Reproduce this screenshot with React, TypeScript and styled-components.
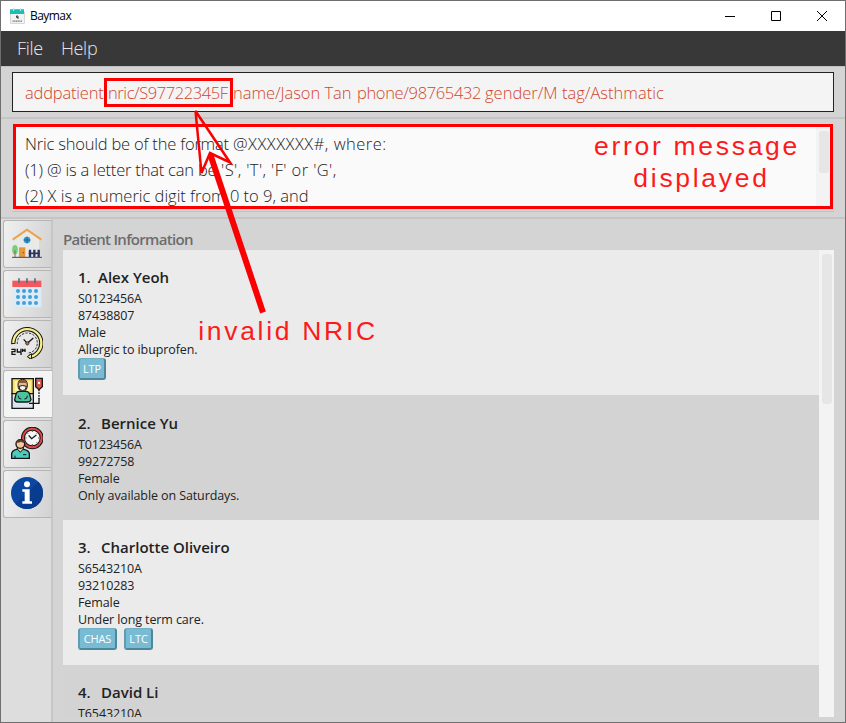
import React from "react";
import styled, { createGlobalStyle } from "styled-components";

const Global = createGlobalStyle`
  * { box-sizing: border-box; }
  html, body { margin: 0; padding: 0; overflow: hidden; }
`;

const ui = `"Open Sans", "Noto Sans", sans-serif`;

const Window = styled.div`
  position: relative;
  display: flex;
  flex-direction: column;
  width: 846px;
  height: 723px;
  overflow: hidden;
  border: 1px solid #6f6f6f;
  background: #d4d4d4;
  font-family: ${ui};
  color: #222;
`;

const TitleBar = styled.header`
  display: flex;
  align-items: center;
  flex: 0 0 30px;
  padding-left: 9px;
  background: #fff;
`;

const Title = styled.span`
  flex: 1;
  margin-left: 5px;
  font-size: 12px;
  line-height: 16px;
  letter-spacing: -0.55px;
  color: #000;
`;

const WindowButton = styled.span`
  display: flex;
  align-items: center;
  justify-content: center;
  width: 46px;
  height: 30px;
`;

const MenuBar = styled.nav`
  display: flex;
  align-items: center;
  flex: 0 0 35px;
  padding: 0 0 1px 16px;
  gap: 18px;
  background: #383838;
`;

const MenuItem = styled.span`
  font-size: 18px;
  font-weight: 300;
  line-height: 24px;
  letter-spacing: -0.3px;
  color: #e6e6e6;
`;

const CommandPane = styled.section`
  flex: 0 0 51px;
  padding: 5px 11px;
  border-top: 1px solid #c0c0c0;
`;

const CommandBox = styled.div`
  display: flex;
  align-items: center;
  height: 40px;
  padding-left: 12px;
  border: 1px solid #222;
  background: #f4f4f4;
  font-size: 16.5px;
  font-weight: 300;
  white-space: pre;
  color: #d0452f;
`;

const Word = styled.span<{ $w: number; $ls?: number }>`
  flex: 0 0 ${(p) => p.$w}px;
  letter-spacing: ${(p) => p.$ls ?? -0.2}px;
`;

const ResultPane = styled.section`
  flex: 0 0 100px;
  padding: 5px 11px;
  border-top: 2px solid #c5c5c5;
`;

const ResultBox = styled.div`
  display: flex;
  height: 88px;
  padding: 0 3px 2px 1px;
  border-bottom: 1px solid #c2c2c2;
`;

const ResultText = styled.div`
  flex: 1;
  height: 85px;
  padding: 7px 0 0 12px;
  background: #fafafa;
  font-size: 16.5px;
  font-weight: 300;
  line-height: 26px;
  letter-spacing: -0.2px;
`;

const ResultLine = styled.div`
  white-space: pre;
`;

const Spaced = styled.span<{ $ls: number }>`
  letter-spacing: ${(p) => p.$ls}px;
`;

const Track = styled.div<{ $w: number }>`
  flex: 0 0 ${(p) => p.$w}px;
  padding: 4px 2px 0 3px;
  background: #f3f3f3;
`;

const Thumb = styled.div<{ $h: number; $top?: number }>`
  width: 10px;
  height: ${(p) => p.$h}px;
  margin-top: ${(p) => p.$top ?? 0}px;
  border-radius: 3px;
  background: #e6e6e6;
`;

const Body = styled.main`
  display: flex;
  flex: 1;
  min-height: 0;
  border-top: 2px solid #c5c5c5;
`;

const Tabs = styled.aside`
  display: flex;
  flex-direction: column;
  flex: 0 0 52px;
  min-width: 0;
  gap: 2px;
  padding: 1px 0 0 2px;
  background: #dddddd;
  border-right: 2px solid #c6c6c6;
`;

const Tab = styled.div<{ $active?: boolean }>`
  flex: 0 0 48px;
  width: ${(p) => (p.$active ? 49 : 48)}px;
  padding: 6px 0 0 7px;
  border: 1px solid #b5b5b5;
  border-right: 0;
  border-radius: 3px 0 0 3px;
  background: ${(p) => (p.$active ? "#f4f4f4" : "linear-gradient(100deg, #f0f0f0, #d2d2d2)")};
`;

const Panel = styled.section`
  display: flex;
  flex-direction: column;
  flex: 1;
  padding: 9px 11px 4px 10px;
`;

const Heading = styled.h2`
  flex: 0 0 22px;
  margin: 0;
  font-size: 15px;
  font-weight: 600;
  line-height: 22px;
  letter-spacing: -0.7px;
  color: #6c6c6c;
`;

const ListFrame = styled.div`
  display: flex;
  height: 467px;
  overflow: hidden;
`;

const List = styled.div`
  flex: 1;
`;

const Card = styled.article<{ $alt: boolean; $h: number; $top: number }>`
  height: ${(p) => p.$h}px;
  padding: ${(p) => p.$top}px 15px 0;
  background: ${(p) => (p.$alt ? "#d3d3d3" : "#ebebeb")};
`;

const Name = styled.h3`
  display: flex;
  margin: 0;
  font-size: 15px;
  font-weight: 600;
  line-height: 25px;
  letter-spacing: 0;
`;

const Index = styled.span<{ $w: number }>`
  flex: 0 0 ${(p) => p.$w}px;
`;

const Detail = styled.div`
  font-size: 12.5px;
  line-height: 17px;
  letter-spacing: -0.1px;
`;

const TagRow = styled.div`
  display: flex;
  gap: 7px;
`;

const Tag = styled.span<{ $w: number }>`
  width: ${(p) => p.$w}px;
  height: 22px;
  border-style: solid;
  border-width: 1px 2px 2px 2px;
  border-color: #6fb0c6 #4d879c #4d879c #5f9cb2;
  border-radius: 3px;
  background: #78bbd3;
  color: #fff;
  font-size: 11px;
  line-height: 20px;
  text-align: center;
  letter-spacing: -0.1px;
`;

/* Red annotations drawn over the window */
const RedFrame = styled.div<{ $x: number; $y: number; $w: number; $h: number }>`
  position: absolute;
  left: ${(p) => p.$x - 1}px;
  top: ${(p) => p.$y - 1}px;
  width: ${(p) => p.$w}px;
  height: ${(p) => p.$h}px;
  border: 3px solid #fb0000;
`;

const Note = styled.div<{ $x: number; $y: number; $w: number; $ls: number }>`
  position: absolute;
  left: ${(p) => p.$x - 1}px;
  top: ${(p) => p.$y - 1}px;
  width: ${(p) => p.$w}px;
  font-family: "Liberation Sans", Arial, sans-serif;
  font-size: 26.5px;
  line-height: 32px;
  letter-spacing: ${(p) => p.$ls}px;
  text-align: center;
  white-space: nowrap;
  color: #fd1a1a;
`;

const Arrow = styled.svg`
  position: absolute;
  left: -1px;
  top: -1px;
  pointer-events: none;
`;

const Svg = styled.svg`
  display: block;
`;

const Icon = ({ children }: { children: React.ReactNode }) => (
  <Svg width="32" height="32" viewBox="0 0 96 96" fill="none">
    {children}
  </Svg>
);

const HouseIcon = () => (
  <Icon>
    <path d="M17 34L48 10L84 36V90H17Z" fill="#e9e9e6" />
    <path d="M5 38L48 8L91 38" stroke="#eba24a" strokeWidth="6" />
    <circle cx="48" cy="39" r="10" fill="#2aa0dc" />
    <path d="M48 29V49M38 39H58" stroke="#2f5f8f" strokeWidth="3" />
    <ellipse cx="12" cy="68" rx="8.5" ry="14" fill="#78cf7b" />
    <path d="M12 70V90" stroke="#8a6a4a" strokeWidth="3" />
    <path d="M24 61H43V90H24Z" fill="#e8963c" />
    <circle cx="37" cy="77" r="2" fill="#7a4520" />
    <path d="M57 68V90M70 68V90M83 68V90" stroke="#2e3563" strokeWidth="7" />
    <path d="M53 79H86" stroke="#2e3563" strokeWidth="5" />
    <path d="M3 91H93" stroke="#3f4577" strokeWidth="3" />
  </Icon>
);

const CalendarIcon = () => (
  <Icon>
    <path d="M5 28H91V91H5Z" fill="#dcebf5" />
    <path d="M4 11H91V30H4Z" fill="#f4585c" />
    <path d="M24 4V19M48 4V19M72 4V19" stroke="#5d6f7c" strokeWidth="5" />
    {[42, 60, 78].map((y) =>
      [21, 39, 57, 75].map((x) => <circle key={`${x}-${y}`} cx={x} cy={y} r="6" fill="#42a0dc" />)
    )}
  </Icon>
);

const ClockIcon = () => (
  <Icon>
    <path d="M7 51A42 42 0 1 1 54 90" stroke="#161616" strokeWidth="13" />
    <path d="M7 48A42 42 0 1 1 54 90" stroke="#f7ef8e" strokeWidth="7" />
    <path d="M62 80L49 89L61 97Z" fill="#f7ef8e" stroke="#161616" strokeWidth="3" />
    <circle cx="49" cy="48" r="31" fill="#e8e8e8" />
    <path d="M19 51A30 30 0 1 1 49 78" stroke="#333" strokeWidth="3" strokeDasharray="7 4" />
    <path d="M38 37L49 49L67 33" stroke="#161616" strokeWidth="4" />
    <circle cx="49" cy="49" r="5" fill="#a8743a" stroke="#161616" strokeWidth="2" />
    <path
      d="M1 67H12V74H3V82H14M19 65V75H30M30 65V84M35 65V75M35 70H42M42 65V75"
      stroke="#161616"
      strokeWidth="4"
    />
  </Icon>
);

const PatientIcon = () => (
  <Icon>
    <path d="M3 5H67V50H3Z" fill="#f5de62" stroke="#161616" strokeWidth="4" />
    <path d="M11 12H24V42H11ZM46 12H59V42H46Z" fill="#fdf3a8" />
    <path d="M3 50H67V94H3Z" fill="#dbe4ef" stroke="#161616" strokeWidth="4" />
    <path
      d="M15 52Q17 43 25 43H44Q54 43 56 52L60 68Q57 76 48 75H22Q12 76 11 68Z"
      fill="#4cc4a2"
      stroke="#161616"
      strokeWidth="4"
    />
    <path d="M22 56L24 64L31 66M49 56L47 64L40 66" stroke="#161616" strokeWidth="3" />
    <path d="M21 24Q21 7 35 7Q49 7 49 24Q49 42 35 43Q21 42 21 24Z" fill="#e8b98f" stroke="#161616" strokeWidth="3" />
    <path d="M22 18Q24 8 35 8Q46 8 48 18Z" fill="#8a5a38" />
    <path d="M24 28Q35 23 46 28L43 38Q35 43 27 38Z" fill="#f4f4f4" stroke="#161616" strokeWidth="3" />
    <path d="M74 4H94V29L84 38L74 29Z" fill="#df5b4d" stroke="#161616" strokeWidth="4" />
    <circle cx="84" cy="18" r="3.5" fill="#fff" />
    <path d="M84 38V66" stroke="#161616" strokeWidth="4" strokeDasharray="5 3" />
    <path d="M84 64V79H54" stroke="#161616" strokeWidth="4" />
  </Icon>
);

const AppointmentIcon = () => (
  <Icon>
    <circle cx="64" cy="33" r="28" fill="#f5f5f5" stroke="#161616" strokeWidth="12" />
    <circle cx="64" cy="33" r="28" stroke="#e04a4a" strokeWidth="6" />
    <path
      d="M64 10V15M64 51V56M43 33H47M81 33H85M48 17L51 20M80 17L77 20M80 49L77 46"
      stroke="#555"
      strokeWidth="3"
    />
    <path d="M53 25L62 35L76 24" stroke="#161616" strokeWidth="4" />
    <path d="M2 94V80Q3 70 17 67H38Q54 70 55 80V94Z" fill="#48cfc0" stroke="#161616" strokeWidth="4" />
    <path d="M19 66L28 76L37 66V60H19Z" fill="#f3c9a0" stroke="#161616" strokeWidth="3" />
    <circle cx="28" cy="51" r="13" fill="#f3c9a0" stroke="#161616" strokeWidth="4" />
    <path d="M15 47Q16 38 28 38Q40 38 41 47Q34 48 30 44Q24 48 15 47Z" fill="#5b3a29" />
    <path d="M36 83H46M12 86V94" stroke="#161616" strokeWidth="3" />
  </Icon>
);

const InfoIcon = () => (
  <Icon>
    <circle cx="48" cy="48" r="48" fill="#0b46a0" />
    <path d="M82 14A48 48 0 0 1 14 82Z" fill="#083c8e" />
    <circle cx="48" cy="22" r="9" fill="#fff" />
    <path d="M34 37H56V73H63V80H34V73H41V44H34Z" fill="#fff" />
  </Icon>
);

const AppIcon = () => (
  <Svg width="15" height="16" viewBox="0 0 15 16">
    <path d="M0.5 4H14.5V15.5H0.5Z" fill="#f3f3f3" stroke="#c9c9c9" strokeWidth="0.7" />
    <path d="M0 1.2H14V6H0Z" fill="#16c1b4" />
    <path d="M3.5 0V3M10.5 0V3" stroke="#b9e9e5" strokeWidth="1.2" />
    <path d="M6.3 8H8V11M6.5 8V9.5H8" stroke="#333" strokeWidth="0.9" fill="none" />
    <path d="M2.5 13.2H12" stroke="#777" strokeWidth="1.2" strokeDasharray="1.3 .4" />
  </Svg>
);

type Patient = {
  name: string;
  details: string[];
  tags: [string, number][];
  height: number;
  top: number;
};

const patients: Patient[] = [
  {
    name: "Alex Yeoh",
    details: ["S0123456A", "87438807", "Male", "Allergic to ibuprofen."],
    tags: [["LTP", 28]],
    height: 145,
    top: 15,
  },
  {
    name: "Bernice Yu",
    details: ["T0123456A", "99272758", "Female", "Only available on Saturdays."],
    tags: [],
    height: 125,
    top: 16,
  },
  {
    name: "Charlotte Oliveiro",
    details: ["S6543210A", "93210283", "Female", "Under long term care."],
    tags: [["CHAS", 39], ["LTC", 29]],
    height: 145,
    top: 15,
  },
  { name: "David Li", details: ["T6543210A"], tags: [], height: 52, top: 15 },
];

const tabIcons = [HouseIcon, CalendarIcon, ClockIcon, PatientIcon, AppointmentIcon, InfoIcon];

export default function App() {
  return (
    <>
      <Global />
      <Window>
        <TitleBar>
          <AppIcon />
          <Title>Baymax</Title>
          <WindowButton>
            <Svg width="10" height="10" viewBox="0 0 10 10"><path d="M0 5.5H10" stroke="#000" /></Svg>
          </WindowButton>
          <WindowButton>
            <Svg width="10" height="10" viewBox="0 0 10 10"><path d="M.5 .5H9.5V9.5H.5Z" stroke="#000" fill="none" /></Svg>
          </WindowButton>
          <WindowButton>
            <Svg width="10" height="10" viewBox="0 0 10 10"><path d="M0 0L10 10M10 0L0 10" stroke="#000" /></Svg>
          </WindowButton>
        </TitleBar>
        <MenuBar>
          <MenuItem>File</MenuItem>
          <MenuItem>Help</MenuItem>
        </MenuBar>
        <CommandPane>
          <CommandBox>
            <Word $w={83}>addpatient</Word>
            <Word $w={125} $ls={-0.42}>nric/S97722345F</Word>
            <Word $w={124} $ls={-0.05}>name/Jason Tan</Word>
            <Word $w={128} $ls={-0.35}>phone/98765432</Word>
            <Word $w={77} $ls={0}>gender/M</Word>
            <Word $w={105} $ls={0}>tag/Asthmatic</Word>
          </CommandBox>
        </CommandPane>
        <ResultPane>
          <ResultBox>
            <ResultText>
              <ResultLine>
                Nric should be of the format <Spaced $ls={0.5}>@XXXXXXX#, where:</Spaced>
              </ResultLine>
              <ResultLine>
                (1) @ is a letter that can be<Spaced $ls={0.4}> 'S', 'T', 'F' or 'G',</Spaced>
              </ResultLine>
              <ResultLine>
                <Spaced $ls={-0.02}>(2) X is a numeric digit from 0 to 9, and</Spaced>
              </ResultLine>
            </ResultText>
            <Track $w={15}>
              <Thumb $h={42} $top={3} />
            </Track>
          </ResultBox>
        </ResultPane>
        <Body>
          <Tabs>
            {tabIcons.map((TabIcon, i) => (
              <Tab key={i} $active={i === 3}>
                <TabIcon />
              </Tab>
            ))}
          </Tabs>
          <Panel>
            <Heading>Patient Information</Heading>
            <ListFrame>
              <List>
                {patients.map((p, i) => (
                  <Card key={p.name} $alt={i % 2 === 1} $h={p.height} $top={p.top}>
                    <Name>
                      <Index $w={i === 0 ? 20 : 23}>{i + 1}.</Index>
                      <span>{p.name}</span>
                    </Name>
                    {p.details.map((d) => (
                      <Detail key={d}>{d}</Detail>
                    ))}
                    <TagRow>
                      {p.tags.map(([label, w]) => (
                        <Tag key={label} $w={w}>{label}</Tag>
                      ))}
                    </TagRow>
                  </Card>
                ))}
              </List>
              <Track $w={15}>
                <Thumb $h={150} />
              </Track>
            </ListFrame>
          </Panel>
        </Body>
        <RedFrame $x={104} $y={78} $w={129} $h={29} />
        <RedFrame $x={13} $y={124} $w={820} $h={85} />
        <Note $x={592} $y={130} $w={210} $ls={2.7}>error message</Note>
        <Note $x={592} $y={162} $w={219} $ls={2.7}>displayed</Note>
        <Note $x={196} $y={315} $w={184} $ls={2.7}>invalid NRIC</Note>
        <Arrow width="846" height="723" viewBox="0 0 846 723" fill="none" stroke="#fb0000">
          <path d="M195.5 111L201.5 173L210 153L230 162.5Z" strokeWidth="2.5" />
          <path d="M210.5 155L263 312.5" strokeWidth="6" />
        </Arrow>
      </Window>
    </>
  );
}
